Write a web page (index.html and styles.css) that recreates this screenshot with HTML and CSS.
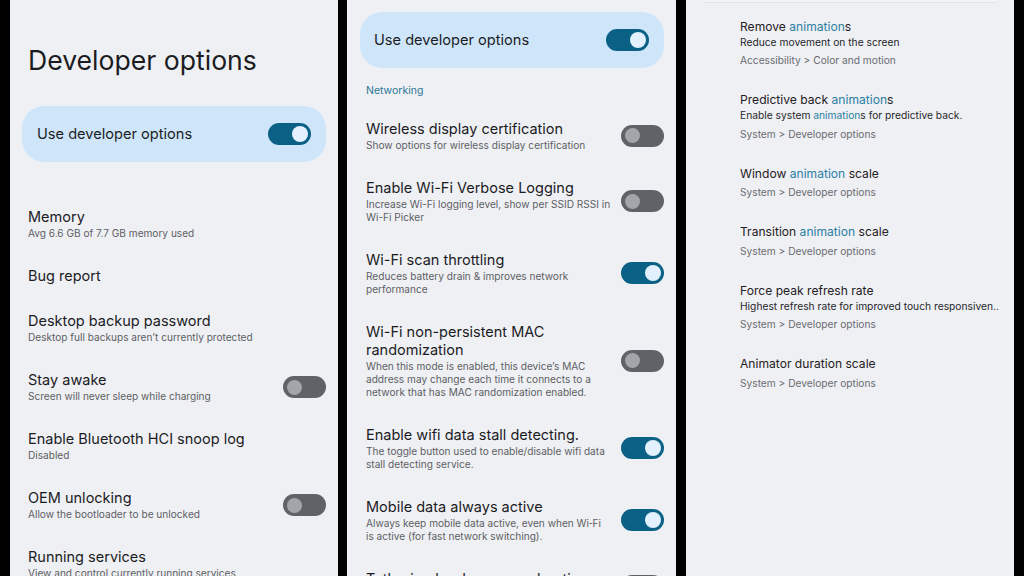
FILE: index.html
```html
<!DOCTYPE html>
<html lang="en">
<head>
<meta charset="utf-8">
<title>Developer options</title>
<link rel="stylesheet" href="styles.css">
</head>
<body>
<div class="screens">

  <section class="panel panel-one">
    <h1 class="page-title">Developer options</h1>
    <div class="master">
      <span class="master-label">Use developer options</span>
      <span class="toggle on"></span>
    </div>
    <div class="list list-one">
      <div class="item"><div class="text"><div class="title">Memory</div><div class="sub">Avg 6.6 GB of 7.7 GB memory used</div></div></div>
      <div class="item"><div class="text"><div class="title">Bug report</div></div></div>
      <div class="item"><div class="text"><div class="title">Desktop backup password</div><div class="sub">Desktop full backups aren’t currently protected</div></div></div>
      <div class="item"><div class="text"><div class="title">Stay awake</div><div class="sub">Screen will never sleep while charging</div></div><span class="toggle"></span></div>
      <div class="item"><div class="text"><div class="title">Enable Bluetooth HCI snoop log</div><div class="sub">Disabled</div></div></div>
      <div class="item"><div class="text"><div class="title">OEM unlocking</div><div class="sub">Allow the bootloader to be unlocked</div></div><span class="toggle"></span></div>
      <div class="item"><div class="text"><div class="title">Running services</div><div class="sub">View and control currently running services</div></div></div>
    </div>
  </section>

  <section class="panel panel-two">
    <div class="master master-two">
      <span class="master-label">Use developer options</span>
      <span class="toggle on"></span>
    </div>
    <div class="section-label">Networking</div>
    <div class="list list-two">
      <div class="item"><div class="text"><div class="title">Wireless display certification</div><div class="sub">Show options for wireless display certification</div></div><span class="toggle"></span></div>
      <div class="item"><div class="text"><div class="title">Enable Wi-Fi Verbose Logging</div><div class="sub">Increase Wi-Fi logging level, show per SSID RSSI in Wi-Fi Picker</div></div><span class="toggle"></span></div>
      <div class="item"><div class="text"><div class="title">Wi-Fi scan throttling</div><div class="sub">Reduces battery drain &amp; improves network performance</div></div><span class="toggle on"></span></div>
      <div class="item"><div class="text"><div class="title">Wi-Fi non-persistent MAC randomization</div><div class="sub">When this mode is enabled, this device’s MAC address may change each time it connects to a network that has MAC randomization enabled.</div></div><span class="toggle"></span></div>
      <div class="item"><div class="text"><div class="title">Enable wifi data stall detecting.</div><div class="sub">The toggle button used to enable/disable wifi data stall detecting service.</div></div><span class="toggle on"></span></div>
      <div class="item"><div class="text"><div class="title">Mobile data always active</div><div class="sub">Always keep mobile data active, even when Wi&#8209;Fi <span class="keep">is active</span> (for fast network switching).</div></div><span class="toggle on"></span></div>
      <div class="item"><div class="text"><div class="title">Tethering hardware acceleration</div><div class="sub">Use tethering hardware acceleration if available</div></div><span class="toggle"></span></div>
    </div>
  </section>

  <section class="panel panel-three">
    <div class="search-edge"></div>
    <div class="results">
      <div class="result">
        <div class="r-title">Remove <span class="hl">animation</span>s</div>
        <div class="r-sub">Reduce movement on the screen</div>
        <div class="r-path">Accessibility &gt; Color and motion</div>
      </div>
      <div class="result">
        <div class="r-title">Predictive back <span class="hl">animation</span>s</div>
        <div class="r-sub">Enable system <span class="hl">animation</span>s for predictive back.</div>
        <div class="r-path">System &gt; Developer options</div>
      </div>
      <div class="result">
        <div class="r-title">Window <span class="hl">animation</span> scale</div>
        <div class="r-path">System &gt; Developer options</div>
      </div>
      <div class="result">
        <div class="r-title">Transition <span class="hl">animation</span> scale</div>
        <div class="r-path">System &gt; Developer options</div>
      </div>
      <div class="result">
        <div class="r-title">Force peak refresh rate</div>
        <div class="r-sub">Highest refresh rate for improved touch responsiven..</div>
        <div class="r-path">System &gt; Developer options</div>
      </div>
      <div class="result">
        <div class="r-title">Animator duration scale</div>
        <div class="r-path">System &gt; Developer options</div>
      </div>
    </div>
  </section>

</div>
</body>
</html>
```

FILE: styles.css
```css
* { box-sizing: border-box; }

html, body {
  margin: 0;
  padding: 0;
  background: #000;
  width: 1024px;
  height: 576px;
  overflow: hidden;
}

body {
  font-family: "Inter", "Noto Sans", sans-serif;
  color: #1b1c1f;
}

.screens {
  display: flex;
  height: 576px;
  padding: 0 10px;
}

.panel {
  background: #eff0f4;
  height: 576px;
  overflow: hidden;
  flex: none;
}

.panel-one {
  width: 328px;
  padding: 0 12px 0 18px;
}

.panel-two {
  width: 329px;
  margin-left: 9px;
  padding: 0 12px 0 19px;
}

.panel-three {
  width: 328px;
  margin-left: 10px;
  padding: 0 15px 0 54px;
}

.page-title {
  margin: 44px 0 0 0;
  font-size: 26.6px;
  line-height: 32px;
  font-weight: 400;
  letter-spacing: 0;
  color: #1b1c1f;
}

.master {
  display: flex;
  align-items: center;
  justify-content: space-between;
  height: 56px;
  margin: 30px 0 0 -6px;
  padding: 0 15px 0 15px;
  background: #cfe6fa;
  border-radius: 22px;
}

.master-two {
  margin: 12px 0 0 -6px;
  padding: 0 15px 0 14px;
}

.master-label {
  font-size: 14.6px;
  color: #1b1c1f;
}

.toggle {
  flex: none;
  position: relative;
  width: 43px;
  height: 22px;
  border-radius: 11px;
  background: #5f6368;
}

.toggle::after {
  content: "";
  position: absolute;
  top: 3.5px;
  left: 4px;
  width: 15px;
  height: 15px;
  border-radius: 50%;
  background: #a2a5aa;
}

.toggle.on {
  background: #0b6185;
}

.toggle.on::after {
  left: auto;
  right: 3px;
  top: 3px;
  width: 16px;
  height: 16px;
  background: #e2f1fd;
}

.list-one {
  margin-top: 33px;
}

.section-label {
  margin: 16px 0 9.5px 0;
  font-size: 10.5px;
  line-height: 13px;
  color: #2b7895;
}

.item {
  display: flex;
  align-items: center;
  gap: 10px;
  padding: 13px 0 14px 0;
}

.text {
  flex: 1;
  min-width: 0;
}

.title {
  font-size: 14.5px;
  line-height: 18px;
  color: #1b1c1f;
}

.sub {
  margin-top: 1px;
  font-size: 10.1px;
  line-height: 13px;
  color: #5d5f64;
}

.keep {
  white-space: nowrap;
}

.search-edge {
  height: 3px;
  margin: 0 2px 0 -37px;
  background: #f3f4f7;
  border-bottom: 1px solid #e2e3e7;
}

.results {
  padding-top: 15.5px;
  display: flex;
  flex-direction: column;
  gap: 24px;
}

.r-title {
  font-size: 12.1px;
  line-height: 16px;
  color: #1f2023;
  white-space: nowrap;
}

.r-sub {
  font-size: 10.25px;
  line-height: 15px;
  color: #26272a;
  white-space: nowrap;
}

.r-path {
  margin-top: 3.5px;
  font-size: 10.2px;
  line-height: 15px;
  color: #6a6c71;
  white-space: nowrap;
}

.hl {
  color: #2b7fa3;
}
```
